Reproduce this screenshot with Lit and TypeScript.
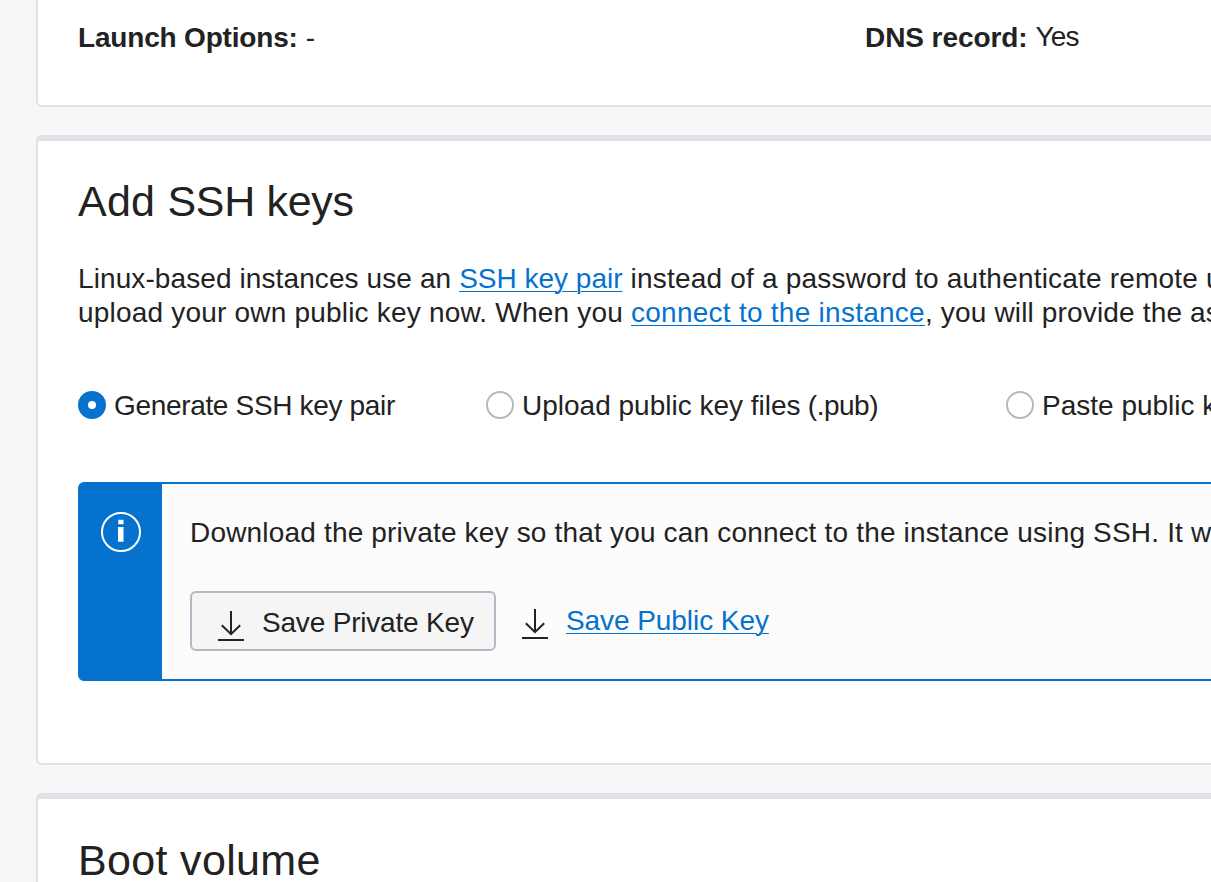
import { LitElement, html, css } from "lit";
import { customElement, property, state } from "lit/decorators.js";

@customElement("download-icon")
class DownloadIcon extends LitElement {
  static styles = css`
    :host { display: block; flex: none; width: 26px; height: 30px; }
    svg { display: block; }
  `;
  render() {
    return html`<svg width="26" height="30" viewBox="0 0 26 30" fill="none" stroke="#222" stroke-width="2">
      <path d="M13 0V23" /><path d="M3.8 14.3L13 23.2L22.2 14.3" /><path d="M0 29H26" />
    </svg>`;
  }
}

@customElement("radio-option")
class RadioOption extends LitElement {
  @property({ type: Boolean }) checked = false;
  static styles = css`
    :host { display: flex; gap: 8px; white-space: nowrap; line-height: 34px; cursor: pointer; }
    .ring { box-sizing: border-box; flex: none; width: 28px; height: 28px; margin-top: 2px; border: 2px solid #b3b9c5; border-radius: 50%; background: #fff; }
    .ring.on { border: 10px solid #0572ce; }
  `;
  render() {
    return html`<span class="ring ${this.checked ? "on" : ""}"></span><span><slot></slot></span>`;
  }
}

@customElement("app-root")
class AppRoot extends LitElement {
  @state() selected = 0;
  static styles = css`
    :host { display: block; height: 882px; overflow: hidden; background: #f7f7f7; color: #222;
      font: 28px/34px "Liberation Sans", Arial, sans-serif; }
    .page { display: flex; flex-direction: column; gap: 28px; padding-left: 36px; }
    .card { box-sizing: border-box; width: 1400px; background: #fff; border: 2px solid #e1e2e7; border-top-width: 6px; border-radius: 6px; padding: 0 40px; white-space: nowrap; }
    .summary { display: grid; grid-template-columns: 787px 1fr; height: 107px; border-top: 0; border-radius: 0 0 6px 6px; padding-top: 21px; }
    .pair { display: flex; gap: 8px; }
    .pair b { letter-spacing: -0.18px; }
    .pair b.dns { letter-spacing: -0.08px; }
    .raised { margin-top: -1px; letter-spacing: -0.8px; }
    .ssh { height: 630px; }
    h2 { margin: 0; font-size: 43px; font-weight: 400; line-height: 50px; padding-top: 35px; }
    p { margin: 0; }
    .intro { padding-top: 36px; }
    .a { letter-spacing: 0.1px; }
    .b { letter-spacing: 0.2px; }
    .c { letter-spacing: 0.2px; }
    .d { letter-spacing: 0.26px; }
    .e { letter-spacing: 0.16px; }
    .info { letter-spacing: 0.18px; }
    .wide { letter-spacing: 0.25px; }
    .tight { letter-spacing: -0.33px; }
    .tighter { letter-spacing: -0.5px; }
    a { color: #0572ce; text-decoration: underline; text-decoration-thickness: 1px; text-underline-offset: 3px; }
    .radios { display: grid; grid-template-columns: 408px 520px 1fr; padding-top: 59px; }
    .notice { box-sizing: border-box; display: flex; height: 199px; margin-top: 59px; border: 2px solid #0572ce; border-radius: 6px; background: #fcfcfc; }
    .mark { box-sizing: border-box; flex: none; width: 82px; padding: 28px 0 0 21px; background: #0572ce; }
    .mark svg { display: block; }
    .body { padding: 32px 28px 0; }
    .actions { display: flex; padding-top: 41px; }
    .button { box-sizing: border-box; display: flex; gap: 18px; width: 306px; height: 60px; padding: 13px 0 0 26px; border: 2px solid #b3b9c5; border-radius: 6px; background: #f5f5f5; letter-spacing: -0.19px; }
    .button download-icon, .link download-icon { margin-top: 5px; }
    .link { display: flex; gap: 18px; padding: 13px 0 0 26px; letter-spacing: -0.07px; }
    .boot { height: 300px; }
    .boot h2 { padding: 36px 0 0; letter-spacing: 0.33px; }
  `;
  render() {
    const options = [
      html`<span class="tight">Generate SSH key pair</span>`,
      html`Upload public key files<span class="tighter"> (.pub)</span>`,
      html`Paste public k`,
    ];
    return html`<div class="page">
      <section class="card summary">
        <div class="pair"><b>Launch Options:</b><span>-</span></div>
        <div class="pair"><b class="dns">DNS record:</b><span class="raised">Yes</span></div>
      </section>
      <section class="card ssh">
        <h2><span class="wide">Add </span><span class="tight">SSH keys</span></h2>
        <p class="intro"><span class="a">Linux-based instances use an </span><a>SSH key pair</a><span class="b"> instead of a password to authenticate remote u</span><br /><span class="c">upload your own public key now. When you </span><a class="d">connect to the instance</a><span class="e">, you will provide the as</span></p>
        <div class="radios">
          ${options.map((o, i) => html`<radio-option .checked=${this.selected === i} @click=${() => (this.selected = i)}>${o}</radio-option>`)}
        </div>
        <div class="notice">
          <div class="mark"><svg width="40" height="40" viewBox="0 0 40 40">
            <circle cx="20" cy="20" r="19" fill="none" stroke="#fff" stroke-width="2" />
            <path d="M17.3 7.7H22.5V12.3H17.3ZM17 15H22.5V29.8H17Z" fill="#fff" />
          </svg></div>
          <div class="body">
            <p class="info">Download the private key so that you can connect to the instance using SSH. It w</p>
            <div class="actions">
              <div class="button"><download-icon></download-icon><span>Save Private Key</span></div>
              <div class="link"><download-icon></download-icon><a>Save Public Key</a></div>
            </div>
          </div>
        </div>
      </section>
      <section class="card boot"><h2>Boot volume</h2></section>
    </div>`;
  }
}
